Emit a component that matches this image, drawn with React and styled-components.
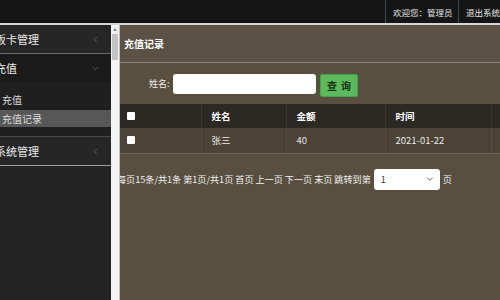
import React from "react";
import styled, { createGlobalStyle } from "styled-components";
import { ChevronLeft, ChevronDown } from "lucide-react";

const GlobalStyle = createGlobalStyle`
  body {
    margin: 0;
    background: #161616;
    font-family: "Noto Sans CJK SC", "Noto Sans", sans-serif;
  }
`;

const App = () => {
  return (
    <Page>
      <GlobalStyle />
      <TopBar>
        <TopItem>欢迎您：管理员</TopItem>
        <TopItem wide>退出系统</TopItem>
      </TopBar>
      <Body>
        <Sidebar>
          <MenuTitle>
            <span>饭卡管理</span>
            <ChevronLeft size={9} strokeWidth={1.5} />
          </MenuTitle>
          <MenuGroup>
            <MenuTitle open>
              <span>充值</span>
              <ChevronDown size={9} strokeWidth={1.5} />
            </MenuTitle>
            <SubItem>充值</SubItem>
            <SubItem active>充值记录</SubItem>
          </MenuGroup>
          <MenuTitle last>
            <span>系统管理</span>
            <ChevronLeft size={9} strokeWidth={1.5} />
          </MenuTitle>
        </Sidebar>
        <ScrollTrack>
          <ScrollArrow />
          <ScrollThumb />
        </ScrollTrack>
        <Main>
          <PanelHeading>充值记录</PanelHeading>
          <SearchBar>
            <Label>姓名:</Label>
            <SearchInput />
            <SearchButton>查询</SearchButton>
          </SearchBar>
          <Table>
            <thead>
              <HeadRow>
                <Cell><Check /></Cell>
                <Cell>姓名</Cell>
                <Cell>金额</Cell>
                <Cell>时间</Cell>
                <Cell />
              </HeadRow>
            </thead>
            <tbody>
              <DataRow>
                <Cell><Check /></Cell>
                <Cell>张三</Cell>
                <Cell>40</Cell>
                <Cell>2021-01-22</Cell>
                <Cell />
              </DataRow>
            </tbody>
          </Table>
          <Pager>
            <span>每页15条/共1条 第1页/共1页 首页 上一页 下一页 末页 跳转到第</span>
            <PageSelect>
              <span>1</span>
              <ChevronDown size={10} strokeWidth={2} />
            </PageSelect>
            <span>页</span>
          </Pager>
        </Main>
      </Body>
    </Page>
  );
};

// STYLED COMPONENTS
const Page = styled.div`
  width: 500px;
  height: 300px;
  overflow: hidden;
  display: flex;
  flex-direction: column;
`;

const TopBar = styled.div`
  height: 23px;
  flex-shrink: 0;
  background: #151515;
  border-bottom: 2px solid #d4d4d4;
  display: flex;
  justify-content: flex-end;
  margin-right: -10px;
`;

const TopItem = styled.div`
  display: flex;
  align-items: center;
  box-sizing: border-box;
  width: ${p => (p.wide ? "52px" : "73px")};
  padding-left: 7px;
  border-left: 1px solid #3c4a52;
  color: #e4e4e4;
  font-size: 8.5px;
  white-space: nowrap;
  overflow: hidden;
`;

const Body = styled.div`
  flex: 1;
  display: flex;
  min-height: 0;
`;

const Sidebar = styled.div`
  width: 111px;
  flex-shrink: 0;
  background: #232323;
  overflow: hidden;
`;

const MenuTitle = styled.div`
  height: 28px;
  display: flex;
  align-items: center;
  justify-content: space-between;
  padding: 0 11px 0 0;
  margin-left: -5px;
  color: #ececec;
  font-size: 11px;
  background: ${p => (p.open ? "#1b1b1b" : "#262626")};
  border-bottom: ${p => (p.open ? "none" : p.last ? "1px solid #a0a0a0" : "1px solid #6a6a6a")};
  svg {
    color: #8a8a8a;
  }
`;

const MenuGroup = styled.div`
  background: #1f1f1f;
  padding-bottom: 9px;
  border-bottom: 1px solid #4a4a4a;
`;

const SubItem = styled.div`
  height: 17px;
  display: flex;
  align-items: center;
  padding-left: 2px;
  margin-top: ${p => (p.active ? "2px" : "9px")};
  color: #dedede;
  font-size: 10px;
  background: ${p => (p.active ? "#575757" : "transparent")};
`;

const ScrollTrack = styled.div`
  width: 8px;
  flex-shrink: 0;
  background: #f2f2f2;
  display: flex;
  flex-direction: column;
  align-items: center;
  padding-top: 3px;
  border-right: 1px solid #bdbdbd;
`;

const ScrollArrow = styled.div`
  width: 0;
  height: 0;
  border-left: 2px solid transparent;
  border-right: 2px solid transparent;
  border-bottom: 3px solid #8a8a8a;
  margin-bottom: 3px;
`;

const ScrollThumb = styled.div`
  width: 6px;
  height: 26px;
  background: #c3c3c3;
`;

const Main = styled.div`
  flex: 1;
  background: #594f40;
  overflow: hidden;
  display: flex;
  flex-direction: column;
`;

const PanelHeading = styled.div`
  height: 37px;
  flex-shrink: 0;
  display: flex;
  align-items: center;
  padding-left: 4px;
  color: #ffffff;
  font-size: 10px;
  font-weight: bold;
  border-bottom: 1px solid #8e8474;
  background: #5b5144;
`;

const SearchBar = styled.div`
  height: 41px;
  flex-shrink: 0;
  display: flex;
  align-items: center;
  padding-left: 29px;
`;

const Label = styled.span`
  color: #eeeeee;
  font-size: 9px;
  width: 24px;
`;

const SearchInput = styled.div`
  width: 143px;
  height: 20px;
  background: #ffffff;
  border-radius: 3px;
`;

const SearchButton = styled.button`
  width: 38px;
  height: 23px;
  margin-left: 4px;
  margin-top: 4px;
  background: #5cba5c;
  border: 1px solid #4a9d4a;
  border-radius: 2px;
  box-sizing: border-box;
  display: flex;
  align-items: center;
  justify-content: center;
  font-family: inherit;
  color: #153015;
  font-size: 10px;
  font-weight: bold;
  letter-spacing: 4px;
  padding: 0 0 0 4px;
`;

const Table = styled.table`
  width: 392px;
  flex-shrink: 0;
  border-collapse: collapse;
  table-layout: fixed;
  td { box-sizing: border-box; }
  td:nth-child(1) { width: 81px; padding-left: 7px; }
  td:nth-child(2) { width: 85px; }
  td:nth-child(3) { width: 99px; }
  td:nth-child(4) { width: 106px; }
`;

const HeadRow = styled.tr`
  height: 24px;
  background: #2c2823;
  font-weight: bold;
  color: #ffffff;
  td + td {
    border-left: 1px solid #3e3730;
  }
`;

const DataRow = styled.tr`
  height: 25px;
  background: #4b4336;
  color: #e8e8e8;
  border-bottom: 1px solid #6e6454;
  td + td {
    border-left: 1px solid #574e41;
  }
`;

const Cell = styled.td`
  font-size: 9.5px;
  padding: 0 0 0 10px;
  vertical-align: middle;
  white-space: nowrap;
`;

const Check = styled.div`
  width: 8px;
  height: 8px;
  background: #ffffff;
  border-radius: 1px;
`;

const Pager = styled.div`
  display: flex;
  align-items: center;
  margin-top: 15px;
  margin-left: -3px;
  color: #f2f2f2;
  font-size: 9.1px;
  white-space: nowrap;
`;

const PageSelect = styled.div`
  width: 66px;
  height: 21px;
  margin: 0 3px 0 3px;
  background: #ffffff;
  border-radius: 3px;
  display: flex;
  align-items: center;
  justify-content: space-between;
  padding: 0 5px 0 7px;
  box-sizing: border-box;
  color: #333333;
  font-size: 9px;
  flex-shrink: 0;
  svg {
    color: #555555;
  }
`;

export default App;
